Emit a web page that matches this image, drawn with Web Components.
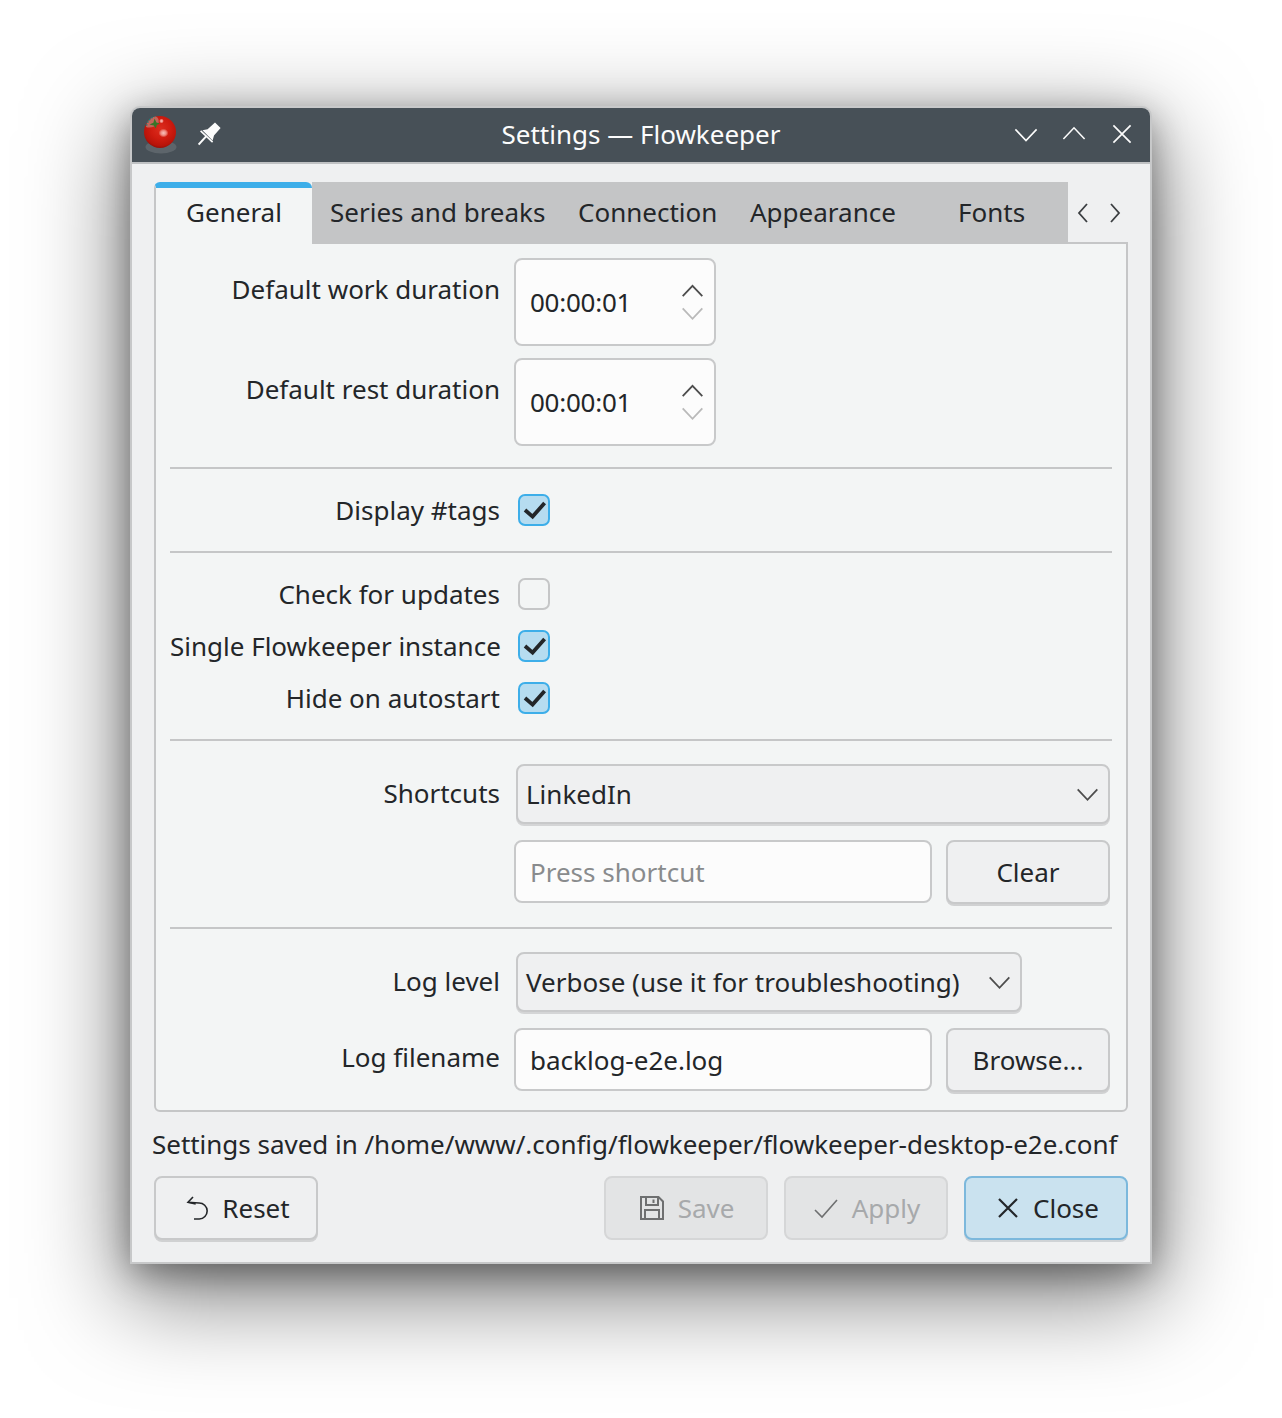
<!DOCTYPE html>
<html>
<head>
<meta charset="utf-8">
<title>Settings — Flowkeeper</title>
<style>
    html, body { margin: 0; background: #fff; }
    body { width: 1282px; height: 1418px; overflow: hidden; font: 26px "Noto Sans", sans-serif; color: #232629; }
</style>
</head>
<body>
<app-window>
    <settings-tabs></settings-tabs>
    <settings-pane>
        <form-row label="Default work duration" top="15"><spin-box value="00:00:01"></spin-box></form-row>
        <form-row label="Default rest duration" top="15" gap="12"><spin-box value="00:00:01"></spin-box></form-row>
        <h-sep style="margin:21px 0 25px"></h-sep>
        <form-row label="Display #tags"><check-box checked></check-box></form-row>
        <h-sep style="margin:25px 0 25px"></h-sep>
        <form-row label="Check for updates"><check-box></check-box></form-row>
        <form-row label="Single Flowkeeper instance" gap="20"><check-box checked></check-box></form-row>
        <form-row label="Hide on autostart" gap="20"><check-box checked></check-box></form-row>
        <h-sep style="margin:25px 0 23px"></h-sep>
        <form-row label="Shortcuts" top="13"><combo-box text="LinkedIn" width="594"></combo-box></form-row>
        <form-row gap="16">
            <line-edit placeholder="Press shortcut"></line-edit>
            <push-button style="width:164px;height:64px">Clear</push-button>
        </form-row>
        <h-sep style="margin:23px 0 23px"></h-sep>
        <form-row label="Log level" top="13"><combo-box text="Verbose (use it for troubleshooting)" width="506"></combo-box></form-row>
        <form-row label="Log filename" top="13" gap="16">
            <line-edit value="backlog-e2e.log"></line-edit>
            <push-button style="width:164px;height:64px">Browse...</push-button>
        </form-row>
    </settings-pane>
    <status-line>Settings saved in /home/www/.config/flowkeeper/flowkeeper-desktop-e2e.conf</status-line>
    <button-row>
        <push-button icon="reset" style="width:164px;height:64px">Reset</push-button>
        <span slot="right">
            <push-button icon="save" disabled style="width:164px;height:64px">Save</push-button>
            <push-button icon="apply" disabled style="width:164px;height:64px">Apply</push-button>
            <push-button icon="close" focused style="width:164px;height:64px">Close</push-button>
        </span>
    </button-row>
</app-window>

<script>
// icons are all 24x24 viewbox, drawn with thin strokes like breeze
const ICONS = {
    reset: '<path d="M9 1 L4 6.3 L11.7 8" /><path d="M4 6.3 L15 7 A8 8 0 0 1 15.3 23 L10 23" />',
    save: '<path d="M1 1 H18.5 L23 5.5 V23 H1 Z" stroke-width="2" /><path d="M6 1 V9 H18 V1 M13.5 3.5 V7" stroke-width="2" /><path d="M5 23 V14 H19 V23" stroke-width="2" />',
    apply: '<path d="M1 14 L8 21 L23 4" />',
    close: '<path d="M4 3 L22 21 M22 3 L4 21" stroke-width="2.2" />'
};

function chevron(d, color, w, h) {
    const points = { up: '1,9.4 8,2 15,9.4', down: '1,1 8,8.4 15,1', left: '10,1 2,10 10,19', right: '2,1 10,10 2,19' }[d];
    const box = (d === 'up' || d === 'down') ? '0 0 16 10' : '0 0 12 20';
    return `<svg width="${w}" height="${h}" viewBox="${box}" fill="none" stroke="${color}" stroke-width="1.8"><polyline vector-effect="non-scaling-stroke" points="${points}"/></svg>`;
}

class Base extends HTMLElement {
    constructor(html) {
        super();
        this.attachShadow({ mode: 'open' }).innerHTML = html;
    }
}

class AppWindow extends Base {
    constructor() {
        super(`
        <style>
            :host { display: block; width: 1018px; height: 1154px; margin: 108px 0 0 132px; background: #eff0f1;
                border-radius: 8px 8px 0 0; box-shadow: 0 0 0 2px #c7c8c9, 0 28px 96px 8px rgba(0,0,0,.5), 0 10px 36px rgba(0,0,0,.4); }
            .title { height: 54px; background: #475057; border-radius: 8px 8px 0 0; border-bottom: 2px solid #bfc1c3;
                display: flex; align-items: center; position: relative; color: #fcfcfc; }
            .title .text { position: absolute; left: 0; right: 0; text-align: center; top: 9px; line-height: 34px; }
            .tomato { margin-left: 11px; display: block; }
            .pin { margin: -2px 0 0 19px; display: block; }
            .ctl { margin-left: auto; margin-right: 18px; display: flex; align-items: center; }
            .ctl svg { display: block; }
            .body { padding: 18px 22px 0 22px; }
        </style>
        <div class="title">
            <svg class="tomato" width="36" height="42" viewBox="0 0 36 42">
                <defs>
                    <radialGradient id="t" cx="52%" cy="40%" r="62%">
                        <stop offset="0" stop-color="#dc2d1e"/><stop offset=".5" stop-color="#cf1c10"/>
                        <stop offset=".85" stop-color="#b8140a"/><stop offset="1" stop-color="#8f0e07"/>
                    </radialGradient>
                    <radialGradient id="h">
                        <stop offset="0" stop-color="#f8c4be"/><stop offset=".55" stop-color="#ee8a80"/><stop offset="1" stop-color="#ee8a80" stop-opacity="0"/>
                    </radialGradient>
                </defs>
                <ellipse cx="18" cy="33" rx="15.5" ry="6.5" fill="#5d656b"/>
                <circle cx="17" cy="18" r="16" fill="url(#t)"/>
                <ellipse cx="20.5" cy="19" rx="5" ry="4.4" fill="url(#h)"/>
                <circle cx="18.5" cy="7" r="2.4" fill="url(#h)"/>
                <path d="M3 13 C3.4 8 7 3.2 12.5 2.4 C15 3 16.4 6 15.4 9.6 C12 13 7 14.6 3 13 Z" fill="#c4655b"/>
                <path d="M3.6 11.6 C4.4 8 7 4 11.6 2.8" fill="none" stroke="#1f7f78" stroke-width="1.3" stroke-dasharray="1.6 1.4"/>
                <path d="M6.4 10.6 L10.4 8.8 L11.6 4.6 L13.4 8.4 L17 9.4 L13.8 11 L12.8 14.6 L10.8 11.4 Z" fill="#3a7428"/>
            </svg>
            <svg class="pin" width="24" height="24" viewBox="0 0 24 24" fill="#fcfcfc">
                <path d="M17 .4 L22.6 6 L16 13.4 L14.6 18.4 L4.4 8.2 L9.6 7.2 Z"/>
                <path d="M2.6 8.8 L14.6 20.2" stroke="#fcfcfc" stroke-width="1.6"/>
                <path d="M8.6 13.8 L.6 22.6" stroke="#fcfcfc" stroke-width="2"/>
            </svg>
            <span class="text">Settings — Flowkeeper</span>
            <span class="ctl">
                <svg width="24" height="15" viewBox="0 0 24 15" fill="none" stroke="#fcfcfc" stroke-width="1.6"><polyline points="1.4,1.4 12,12.6 22.6,1.4"/></svg>
                <svg style="margin:-3px 0 0 24px" width="24" height="15" viewBox="0 0 24 15" fill="none" stroke="#fcfcfc" stroke-width="1.6"><polyline points="1.4,13 12,1.8 22.6,13"/></svg>
                <svg style="margin:-2px 0 0 26px" width="20" height="20" viewBox="0 0 20 20" fill="none" stroke="#fcfcfc" stroke-width="1.7"><path d="M1.4 1.4 L18.6 18.6 M18.6 1.4 L1.4 18.6"/></svg>
            </span>
        </div>
        <div class="body"><slot></slot></div>`);
    }
}

class SettingsTabs extends Base {
    constructor() {
        super(`
        <style>
            :host { display: flex; height: 62px; position: relative; }
            .active { width: 158px; box-sizing: border-box; background: #f3f5f5; border-top: 6px solid #3daee9; border-left: 2px solid #c5c6c7;
                border-radius: 6px 6px 0 0; text-align: center; line-height: 48px; position: relative; z-index: 1; height: 64px; }
            .rest { width: 756px; background: #c4c5c6; position: relative; height: 62px; }
            .rest span { position: absolute; top: 0; line-height: 60px; white-space: nowrap; }
            .arrows { display: flex; gap: 20px; padding-left: 9px; align-items: center; }
            .arrows svg { display: block; }
        </style>
        <div class="active">General</div>
        <div class="rest">
            <span style="left:18px">Series and breaks</span>
            <span style="left:266px">Connection</span>
            <span style="left:438px">Appearance</span>
            <span style="left:646px">Fonts</span>
        </div>
        <div class="arrows">${chevron('left', '#3b3e41', 12, 20)}${chevron('right', '#3b3e41', 12, 20)}</div>`);
    }
}

class SettingsPane extends Base {
    constructor() {
        super(`
        <style>
            :host { display: block; box-sizing: border-box; width: 974px; height: 870px; margin-top: -2px; background: #f3f5f5;
                border: 2px solid #c5c6c7; border-radius: 0 0 6px 6px; padding: 14px 14px 0 14px; }
        </style>
        <slot></slot>`);
    }
}

class FormRow extends Base {
    constructor() {
        super(`
        <style>
            :host { display: grid; grid-template-columns: 330px 1fr; column-gap: 14px; }
            .label { text-align: right; white-space: nowrap; line-height: 32px; }
            .field { display: flex; gap: 14px; align-items: flex-start; }
        </style>
        <div class="label"></div>
        <div class="field"><slot></slot></div>`);
    }
    connectedCallback() {
        const label = this.shadowRoot.querySelector('.label');
        label.textContent = this.getAttribute('label') || '';
        if (this.hasAttribute('top')) label.style.marginTop = this.getAttribute('top') + 'px';
        this.style.marginTop = (this.getAttribute('gap') || 0) + 'px';
    }
}

class SpinBox extends Base {
    constructor() {
        super(`
        <style>
            :host { display: flex; box-sizing: border-box; width: 202px; height: 88px; background: #fcfcfc; border: 2px solid #c8c9ca; border-radius: 8px;
                align-items: center; padding-left: 14px; position: relative; letter-spacing: -.25px; }
            .btns { position: absolute; right: 10px; top: 23px; display: flex; flex-direction: column; gap: 10px; }
            .btns svg { display: block; }
        </style>
        <span class="v"></span>
        <span class="btns">${chevron('up', '#4d4d4d', 23, 14)}${chevron('down', '#b9b9b9', 23, 14)}</span>`);
    }
    connectedCallback() {
        this.shadowRoot.querySelector('.v').textContent = this.getAttribute('value');
    }
}

class HSep extends Base {
    constructor() {
        super(`<style>:host { display: block; height: 2px; background: #c5c6c7; }</style>`);
    }
}

class CheckBox extends Base {
    constructor() {
        super(`
        <style>
            :host { display: block; box-sizing: border-box; width: 32px; height: 32px; margin-left: 4px; border-radius: 7px; border: 2px solid #c5c6c7; background: #f3f5f5; }
            :host([checked]) { border-color: #3daee9; background: #b6dcf0; }
            svg { display: none; }
            :host([checked]) svg { display: block; }
        </style>
        <svg width="28" height="28" viewBox="0 0 28 28" fill="none" stroke="#232629" stroke-width="3.8"><polyline points="5,14 12.6,20.6 24.6,7"/></svg>`);
    }
}

class ComboBox extends Base {
    constructor() {
        super(`
        <style>
            :host { display: flex; box-sizing: border-box; height: 60px; margin-left: 2px; background: #eff0f1; border: 2px solid #c8c9ca; border-radius: 8px;
                box-shadow: 0 2px 0 #d4d5d6; align-items: center; justify-content: space-between; padding: 0 9px 0 8px; white-space: nowrap; }
            svg { display: block; margin-top: 2px; }
        </style>
        <span class="v"></span>${chevron('down', '#4d4d4d', 23, 14)}`);
    }
    connectedCallback() {
        this.shadowRoot.querySelector('.v').textContent = this.getAttribute('text');
        this.style.width = this.getAttribute('width') + 'px';
    }
}

class LineEdit extends Base {
    constructor() {
        super(`
        <style>
            :host { display: flex; box-sizing: border-box; width: 418px; height: 63px; background: #fcfcfc; border: 2px solid #c8c9ca; border-radius: 8px;
                align-items: center; padding-left: 14px; }
            .ph { color: #898b8d; }
        </style>
        <span class="v"></span>`);
    }
    connectedCallback() {
        const v = this.shadowRoot.querySelector('.v');
        if (this.hasAttribute('placeholder')) {
            v.textContent = this.getAttribute('placeholder');
            v.className = 'v ph';
        } else {
            v.textContent = this.getAttribute('value');
        }
    }
}

class PushButton extends Base {
    constructor() {
        super(`
        <style>
            :host { display: inline-flex; box-sizing: border-box; background: #eff0f1; border: 2px solid #c8c9ca; border-radius: 8px; box-shadow: 0 2px 0 #d0d1d2;
                align-items: center; justify-content: center; gap: 14px; white-space: nowrap; vertical-align: top; }
            :host([icon]) { padding-left: 2px; }
            :host([disabled]) { background: #e3e4e5; border-color: #d5d6d7; color: #a7a9ab; box-shadow: none; }
            :host([focused]) { background: #cae2ef; border-color: #7cb8dc; box-shadow: 0 2px 0 #cfd3d6; }
            svg { display: block; fill: none; stroke: #232629; stroke-width: 1.6; }
            :host([disabled]) svg { stroke: #6e6f70; }
        </style>
        <span class="ic"></span><slot></slot>`);
    }
    connectedCallback() {
        const name = this.getAttribute('icon');
        if (name) this.shadowRoot.querySelector('.ic').innerHTML = `<svg width="24" height="24" viewBox="0 0 24 24">${ICONS[name]}</svg>`;
        else this.shadowRoot.querySelector('.ic').remove();
    }
}

class StatusLine extends Base {
    constructor() {
        super(`<style>:host { display: block; margin: 14px 0 0 -2px; line-height: 36px; height: 36px; white-space: nowrap; letter-spacing: -.025px; }</style><slot></slot>`);
    }
}

class ButtonRow extends Base {
    constructor() {
        super(`
        <style>
            :host { display: flex; justify-content: space-between; margin-top: 14px; width: 974px; }
            ::slotted(span) { display: flex; gap: 16px; }
        </style>
        <slot></slot><slot name="right"></slot>`);
    }
}

customElements.define('app-window', AppWindow);
customElements.define('settings-tabs', SettingsTabs);
customElements.define('settings-pane', SettingsPane);
customElements.define('form-row', FormRow);
customElements.define('spin-box', SpinBox);
customElements.define('h-sep', HSep);
customElements.define('check-box', CheckBox);
customElements.define('combo-box', ComboBox);
customElements.define('line-edit', LineEdit);
customElements.define('push-button', PushButton);
customElements.define('status-line', StatusLine);
customElements.define('button-row', ButtonRow);
</script>
</body>
</html>
